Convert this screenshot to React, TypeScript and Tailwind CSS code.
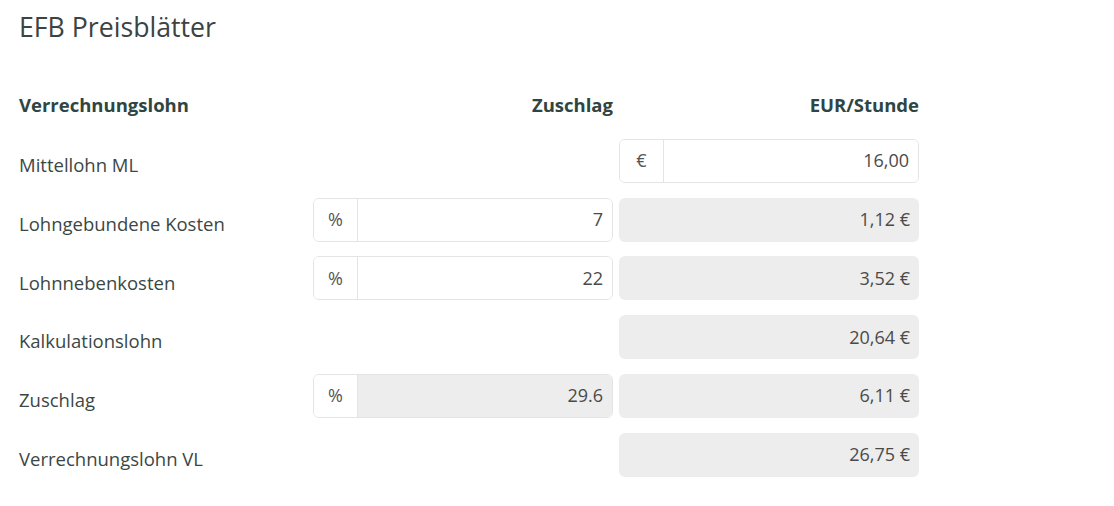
const rows = [
  { label: "Mittellohn ML", pct: null as null | { value: string; readOnly: boolean }, eur: { value: "16,00", editable: true } },
  { label: "Lohngebundene Kosten", pct: { value: "7", readOnly: false }, eur: { value: "1,12 €", editable: false } },
  { label: "Lohnnebenkosten", pct: { value: "22", readOnly: false }, eur: { value: "3,52 €", editable: false } },
  { label: "Kalkulationslohn", pct: null, eur: { value: "20,64 €", editable: false } },
  { label: "Zuschlag", pct: { value: "29.6", readOnly: true }, eur: { value: "6,11 €", editable: false } },
  { label: "Verrechnungslohn VL", pct: null, eur: { value: "26,75 €", editable: false } },
];

function Addon({ symbol, value, readOnly }: { symbol: string; value: string; readOnly: boolean }) {
  return (
    <div className="flex h-[44px] rounded-[6px] border border-[#e3e5e5] overflow-hidden">
      <div className="w-[44px] shrink-0 flex items-center justify-center bg-white text-[#555] border-r border-[#e3e5e5] text-[18px]">
        {symbol}
      </div>
      <div
        className={
          "flex-1 flex items-center justify-end pr-[9px] text-[18px] text-[#4a4a4a] " +
          (readOnly ? "bg-[#ededed]" : "bg-white")
        }
      >
        {value}
      </div>
    </div>
  );
}

export default function App() {
  return (
    <div className="bg-white min-h-screen text-[#3b4745]" style={{ fontFamily: '"Open Sans", sans-serif' }}>
      <div className="pl-[19px] pt-[9px]">
        <h1 className="text-[26.7px] leading-[36px] text-[#3c4341]">EFB Preisblätter</h1>

        <div className="mt-[46px] grid grid-cols-[288px_300px_300px] gap-x-[6px] gap-y-[14.8px] items-center">
          <div className="font-bold text-[18.5px] text-[#2f4541] h-[28px] mb-[5px] flex items-center">Verrechnungslohn</div>
          <div className="font-bold text-[18.5px] text-[#2f4541] text-right mb-[5px]">Zuschlag</div>
          <div className="font-bold text-[18.5px] text-[#2f4541] text-right mb-[5px]">EUR/Stunde</div>

          {rows.map((r) => (
            <div key={r.label} className="contents">
              <div className="text-[18.5px] pt-[8px]">{r.label}</div>
              <div>{r.pct ? <Addon symbol="%" value={r.pct.value} readOnly={r.pct.readOnly} /> : null}</div>
              <div>
                {r.eur.editable ? (
                  <Addon symbol="€" value={r.eur.value} readOnly={false} />
                ) : (
                  <div className="h-[44px] rounded-[6px] bg-[#ededed] flex items-center justify-end pr-[9px] text-[18px] text-[#4a4a4a]">
                    {r.eur.value}
                  </div>
                )}
              </div>
            </div>
          ))}
        </div>
      </div>
    </div>
  );
}
